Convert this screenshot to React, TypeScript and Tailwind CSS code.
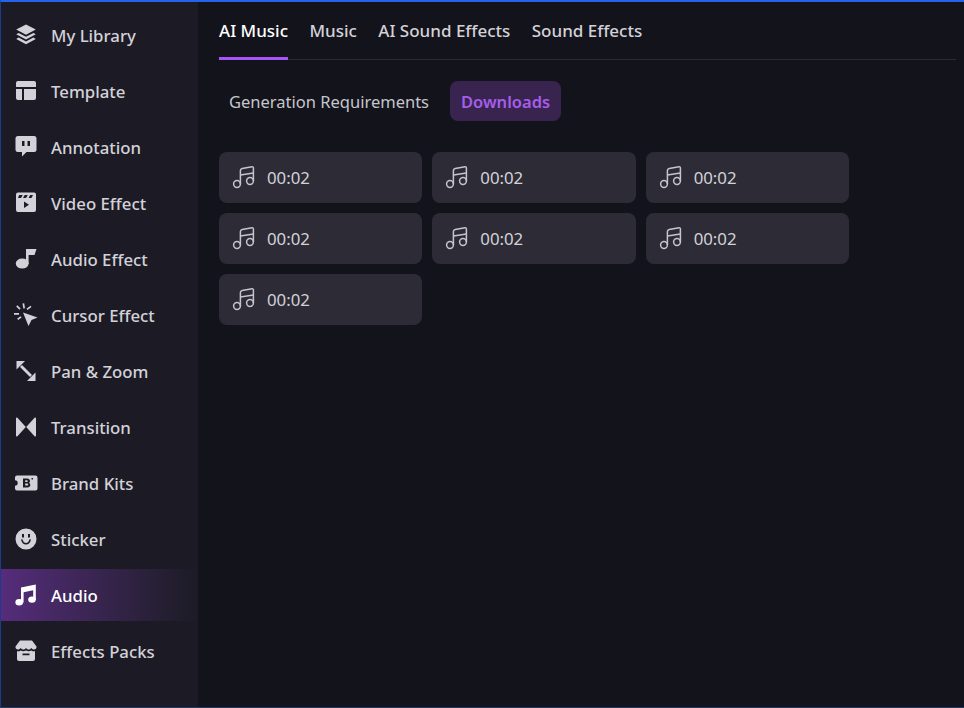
import React from 'react'

const cls = 'h-[22px] w-[22px] shrink-0 text-[#d3d2d8]'

const LibraryIcon = () => (
  <svg viewBox="0 0 22 22" className={cls} fill="currentColor">
    <path d="M11 .5 20.8 5.6 11 10.8 1.2 5.6Z" />
    <path d="M3.6 8.9 11 12.8 18.4 8.9 20.8 10.2 11 15.4 1.2 10.2Z" />
    <path d="M3.6 13.6 11 17.5 18.4 13.6 20.8 14.9 11 20.2 1.2 14.9Z" />
  </svg>
)
const TemplateIcon = () => (
  <svg viewBox="0 0 22 22" className={cls} fill="currentColor">
    <path d="M3 1h16a2 2 0 0 1 2 2v4H1V3a2 2 0 0 1 2-2Z" />
    <path d="M1 9h6v11H3a2 2 0 0 1-2-2Z" />
    <path d="M9 9h12v9a2 2 0 0 1-2 2H9Z" />
  </svg>
)
const AnnotationIcon = () => (
  <svg viewBox="0 0 22 22" className={cls} fill="currentColor" fillRule="evenodd">
    <path d="M3 0h16a2.500 2.500 0 0 1 2.500 2.500v11A2.500 2.500 0 0 1 19 16h-7.500l-4.500 4.500V16H3a2.500 2.500 0 0 1-2.500-2.500v-11A2.500 2.500 0 0 1 3 0ZM7 5v5h2.500V5Zm5.500 0v5H15V5Z" />
  </svg>
)
const VideoEffectIcon = () => (
  <svg viewBox="0 0 22 22" className={cls} fill="currentColor" fillRule="evenodd">
    <path d="M3 .5h16a2 2 0 0 1 2 2V18a2 2 0 0 1-2 2H3a2 2 0 0 1-2-2V2.500a2 2 0 0 1 2-2ZM4.200 3 3 6h3l1.800-3Zm5.500 0L8 6h3l1.800-3Zm5.500 0-1.700 3h3L18 3ZM9 9.500v6.500l5-3.200Z" />
  </svg>
)
const AudioEffectIcon = () => (
  <svg viewBox="0 0 22 22" className={cls} fill="currentColor">
    <ellipse cx="7.200" cy="15.600" rx="6.400" ry="5" />
    <path d="M11 1h10.500l-2 6H13.600v9H11Z" />
  </svg>
)
const CursorEffectIcon = () => (
  <svg viewBox="0 0 24 24" className="h-6 w-6 shrink-0 text-[#d3d2d8]" fill="currentColor">
    <path d="M9 9.500 23.500 14.500 17.500 17 14.500 23Z" />
    <path d="M8.500.5l1.700-.3.800 5-1.700.3ZM2.200 3.500l1.200-1.200 3.200 3.200-1.200 1.200ZM16.500 2.700l1 1.300-4 3-1-1.300ZM0 10h5v1.700H0ZM3.200 15.500l3.500-2.300.9 1.400-3.500 2.300Z" />
  </svg>
)
const PanZoomIcon = () => (
  <svg viewBox="0 0 22 22" className={cls} fill="currentColor">
    <path d="M1.500 1h8.500L1.500 9.500Z" />
    <path d="M20.500 21H12l8.500-8.500Z" />
    <path d="M5 7l2-2 10 10-2 2Z" />
  </svg>
)
const TransitionIcon = () => (
  <svg viewBox="0 0 22 22" className={cls} fill="currentColor">
    <path d="M1 2.200c0-.6.600-1 1.200-.7L10.800 11l-8.600 9.500c-.6.300-1.200-.1-1.200-.7Z" />
    <path d="M21 2.200c0-.6-.6-1-1.200-.7L11.200 11l8.600 9.500c.6.300 1.200-.1 1.200-.7Z" />
  </svg>
)
const BrandKitsIcon = () => (
  <svg viewBox="0 0 24 16" className="h-4 w-6 shrink-0 text-[#d3d2d8]" fill="currentColor" fillRule="evenodd">
    <path d="M3 .5h18.500a2 2 0 0 1 2 2v11a2 2 0 0 1-2 2H3a2 2 0 0 1-2-2v-2.800a2.700 2.700 0 0 0 0-5.400V2.500a2 2 0 0 1 2-2ZM9 3.500v9h4.300c1.900 0 3-1 3-2.500 0-1.100-.6-1.900-1.600-2.200.8-.3 1.300-1 1.300-1.900 0-1.500-1.100-2.400-2.900-2.400Zm2.200 1.700h1.500c.7 0 1.100.3 1.100.9s-.4.900-1.100.9h-1.500Zm0 3.400h1.800c.8 0 1.200.4 1.200 1s-.4 1-1.200 1h-1.800ZM17.500 3h1.500v1.500h-1.500Z" />
  </svg>
)
const StickerIcon = () => (
  <svg viewBox="0 0 22 22" className={cls} fill="currentColor" fillRule="evenodd">
    <path d="M11 .5a10.500 10.500 0 1 1 0 21 10.500 10.500 0 0 1 0-21ZM6 11.500c.5 3 2.500 5 5 5s4.500-2 5-5l-1.500-.3c-.4 2.200-1.800 3.800-3.500 3.800s-3.100-1.600-3.500-3.800ZM7 6v3.500h2V6Zm6 0v3.500h2V6Z" />
  </svg>
)
const AudioIcon = () => (
  <svg viewBox="0 0 22 22" className="h-[22px] w-[22px] shrink-0 text-white" fill="currentColor">
    <path d="M6 3.600 20.800.6V16h-2.600V6.200L8.600 8.200V18.500H6Z" />
    <ellipse cx="4.200" cy="18.300" rx="3.800" ry="3.200" />
    <ellipse cx="17" cy="15.600" rx="3.800" ry="3.200" />
  </svg>
)
const PacksIcon = () => (
  <svg viewBox="0 0 22 22" className={cls} fill="currentColor" fillRule="evenodd">
    <path d="M5 .5h12l4.500 6c.3 2-1 3-2.500 3-1.200 0-2.200-.6-2.700-1.500-.5.900-1.500 1.500-2.700 1.500s-2.100-.6-2.600-1.500c-.5.900-1.400 1.500-2.600 1.500S6.200 8.900 5.700 8C5.200 8.900 4.200 9.500 3 9.500 1.500 9.500.2 8.500.5 6.500Z" />
    <path d="M2 11.200c1.300.3 2.700 0 3.700-.8 1.500 1 3.600 1 5.300 0 1.700 1 3.800 1 5.300 0 1 .8 2.400 1.100 3.700.8V19a2 2 0 0 1-2 2H4a2 2 0 0 1-2-2ZM7.500 13.500v1.700h7v-1.700Z" />
  </svg>
)

const NoteIcon = () => (
  <svg viewBox="0 0 24 24" className="mb-[1px] h-[24px] w-[24px] shrink-0 text-[#c6c5cc]" fill="none" stroke="currentColor" strokeWidth="1.500">
    <circle cx="5" cy="19" r="3.400" />
    <circle cx="18" cy="16" r="3.400" />
    <path d="M8.400 19V5.500c0-1.200.7-1.900 1.800-2.100l9.800-1.600c.9-.1 1.400.3 1.400 1.200V16" />
    <path d="M8.400 10 21.400 8" />
  </svg>
)

const sideItems = [
  { label: 'My Library', icon: <LibraryIcon /> },
  { label: 'Template', icon: <TemplateIcon /> },
  { label: 'Annotation', icon: <AnnotationIcon /> },
  { label: 'Video Effect', icon: <VideoEffectIcon /> },
  { label: 'Audio Effect', icon: <AudioEffectIcon /> },
  { label: 'Cursor Effect', icon: <CursorEffectIcon /> },
  { label: 'Pan & Zoom', icon: <PanZoomIcon /> },
  { label: 'Transition', icon: <TransitionIcon /> },
  { label: 'Brand Kits', icon: <BrandKitsIcon /> },
  { label: 'Sticker', icon: <StickerIcon /> },
  { label: 'Audio', icon: <AudioIcon />, active: true },
  { label: 'Effects Packs', icon: <PacksIcon /> },
]

const tabs = ['AI Music', 'Music', 'AI Sound Effects', 'Sound Effects']
const clips = Array.from({ length: 7 }, () => '00:02')

const App = () => {
  return (
    <div className="flex h-[708px] w-[964px] overflow-hidden border-t-2 border-b border-l border-t-[#2563eb] border-b-[#1e3a6e] border-l-[#1e3a8a] bg-[#13131b] font-['Noto_Sans',sans-serif]">
      <aside className="flex h-full w-[197px] shrink-0 flex-col gap-1 bg-[#1c1b25] pt-[7px]">
        {sideItems.map((item) => (
          <div
            key={item.label}
            className={`flex h-[52px] items-center ${
              item.active
                ? 'bg-gradient-to-r from-[#562c7c] to-[#1c1b25] text-white'
                : 'text-[#d3d2d8]'
            }`}
          >
            <div className="flex w-[50px] shrink-0 items-center justify-center">{item.icon}</div>
            <span className="pt-[1px] text-[16.800px] font-medium">{item.label}</span>
          </div>
        ))}
      </aside>
      <main className="flex-1 pl-[21px] pr-2">
        <div className="flex h-[58px] gap-[21.400px] border-b border-[#2a2a33]">
          {tabs.map((tab, i) => (
            <div
              key={tab}
              className={`flex h-[58px] items-center border-b-[3px] pt-[3px] text-[17px] font-medium ${
                i === 0 ? 'border-[#a855f7] text-white' : 'border-transparent text-[#d3d2d8]'
              }`}
            >
              {tab}
            </div>
          ))}
        </div>
        <div className="mt-[21px] flex items-center gap-[21px] pl-[10px]">
          <span className="pt-[3px] text-[16.500px] text-[#c6c5cc]">Generation Requirements</span>
          <span className="flex h-10 items-center rounded-lg bg-[#392450] px-[11px] pt-[2px] text-[16.500px] font-semibold text-[#a55eea]">
            Downloads
          </span>
        </div>
        <div className="mt-[31px] grid w-[630px] grid-cols-3 gap-[10px]">
          {clips.map((clip, i) => (
            <div key={i} className="flex h-[51px] items-center gap-[11px] rounded-lg bg-[#2d2c36] pl-[13px]">
              <NoteIcon />
              <span className="pt-[1px] text-[16.800px] text-[#d3d2d8]">{clip}</span>
            </div>
          ))}
        </div>
      </main>
    </div>
  )
}

export default App
